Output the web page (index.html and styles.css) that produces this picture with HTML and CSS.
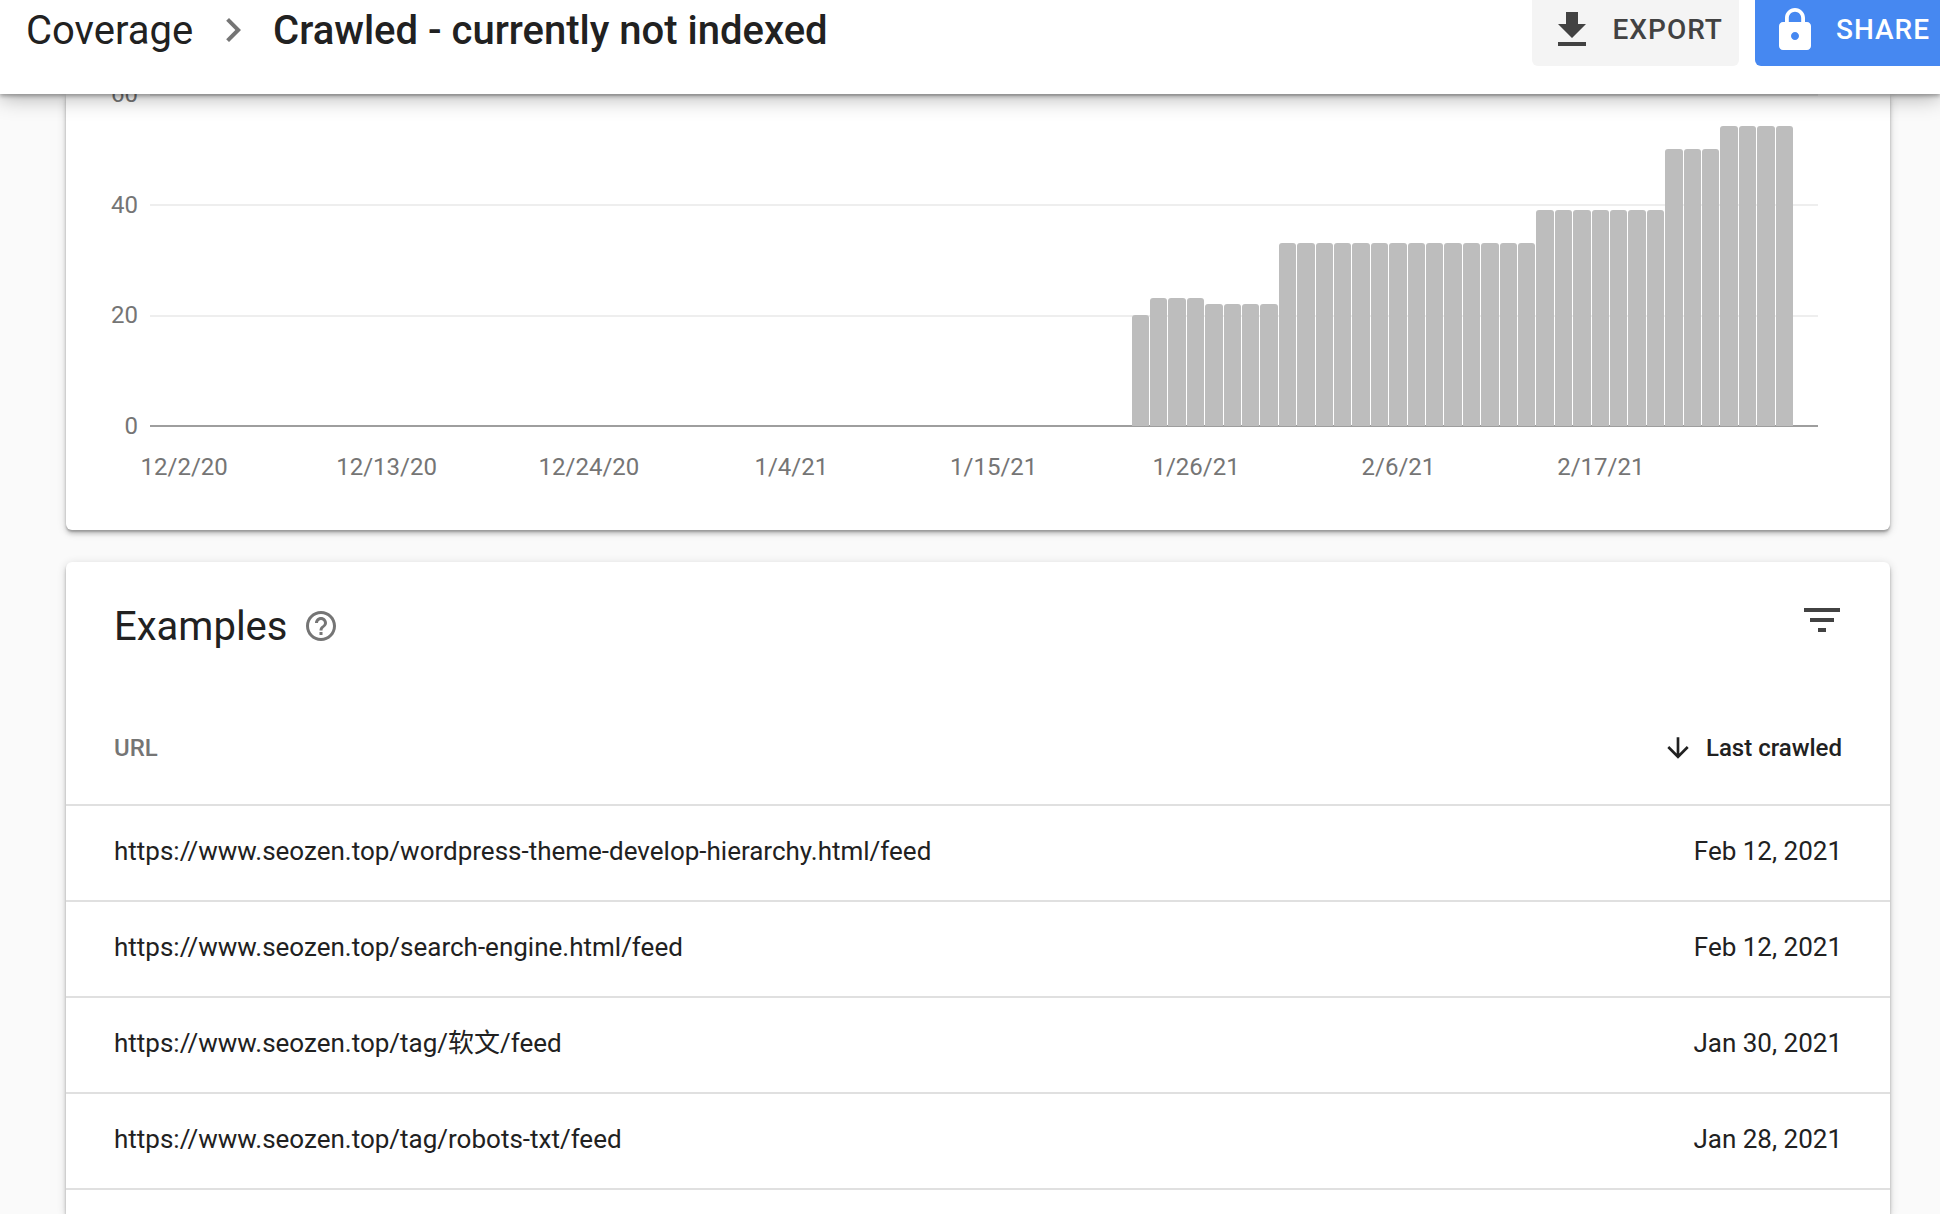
FILE: index.html
```html
<!DOCTYPE html>
<html lang="en">
<head>
<meta charset="utf-8">
<title>Crawled - currently not indexed</title>
<link rel="stylesheet" href="styles.css">
</head>
<body>
<header class="topbar">
  <nav class="crumbs" aria-label="Breadcrumb">
    <a class="crumb" href="#coverage">Coverage</a>
    <svg class="icon crumb-sep" viewBox="0 0 24 24" aria-hidden="true"><path d="M10 6L8.59 7.41 13.17 12l-4.58 4.59L10 18l6-6z"/></svg>
    <h1 class="crumb crumb-current">Crawled - currently not indexed</h1>
  </nav>
  <div class="actions">
    <button class="btn btn-export" type="button">
      <svg class="icon" viewBox="0 0 24 24" aria-hidden="true"><path d="M19 9h-4V3H9v6H5l7 7 7-7zM5 18v2h14v-2H5z"/></svg>
      EXPORT
    </button>
    <button class="btn btn-share" type="button">
      <svg class="icon" viewBox="0 0 24 24" aria-hidden="true"><path d="M18 8h-1V6c0-2.76-2.24-5-5-5S7 3.24 7 6v2H6c-1.1 0-2 .9-2 2v10c0 1.1.9 2 2 2h12c1.100 0 2-.9 2-2V10c0-1.100-.9-2-2-2zm-6 9c-1.100 0-2-.9-2-2s.9-2 2-2 2 .9 2 2-.9 2-2 2zm3.100-9H8.900V6c0-1.710 1.390-3.100 3.100-3.100 1.710 0 3.100 1.390 3.100 3.100v2z"/></svg>
      SHARE
    </button>
  </div>
</header>
<main class="content">
  <section class="card chart" aria-label="Pages over time">
    <div class="y-axis"><span>60</span><span>40</span><span>20</span><span>0</span></div>
    <div class="plot">
      <div class="gridlines"><span></span><span></span><span></span><span class="baseline"></span></div>
      <div class="bars">
        <i style="height:33.333%"></i>
        <i style="height:38.333%"></i><i style="height:38.333%"></i><i style="height:38.333%"></i>
        <i style="height:36.667%"></i><i style="height:36.667%"></i><i style="height:36.667%"></i><i style="height:36.667%"></i>
        <i style="height:55%"></i><i style="height:55%"></i><i style="height:55%"></i><i style="height:55%"></i><i style="height:55%"></i><i style="height:55%"></i><i style="height:55%"></i>
        <i style="height:55%"></i><i style="height:55%"></i><i style="height:55%"></i><i style="height:55%"></i><i style="height:55%"></i><i style="height:55%"></i><i style="height:55%"></i>
        <i style="height:65%"></i><i style="height:65%"></i><i style="height:65%"></i><i style="height:65%"></i><i style="height:65%"></i><i style="height:65%"></i><i style="height:65%"></i>
        <i style="height:83.333%"></i><i style="height:83.333%"></i><i style="height:83.333%"></i>
        <i style="height:90%"></i><i style="height:90%"></i><i style="height:90%"></i><i style="height:90%"></i>
      </div>
    </div>
    <div class="x-axis">
      <div class="tick"><span>12/2/20</span></div>
      <div class="tick"><span>12/13/20</span></div>
      <div class="tick"><span>12/24/20</span></div>
      <div class="tick"><span>1/4/21</span></div>
      <div class="tick"><span>1/15/21</span></div>
      <div class="tick"><span>1/26/21</span></div>
      <div class="tick"><span>2/6/21</span></div>
      <div class="tick"><span>2/17/21</span></div>
    </div>
  </section>
  <section class="card examples">
    <div class="examples-head">
      <h2 class="examples-title">Examples</h2>
      <button class="icon-btn help" type="button" aria-label="Help">
        <svg class="icon" viewBox="0 0 24 24" aria-hidden="true"><path d="M11 18h2v-2h-2v2zm1-16C6.480 2 2 6.480 2 12s4.480 10 10 10 10-4.480 10-10S17.520 2 12 2zm0 18c-4.410 0-8-3.590-8-8s3.590-8 8-8 8 3.590 8 8-3.590 8-8 8zm0-14c-2.210 0-4 1.790-4 4h2c0-1.100.9-2 2-2s2 .9 2 2c0 2-3 1.750-3 5h2c0-2.250 3-2.500 3-5 0-2.210-1.790-4-4-4z"/></svg>
      </button>
      <button class="icon-btn filter" type="button" aria-label="Filter rows">
        <svg class="icon" viewBox="0 0 24 24" aria-hidden="true"><path d="M10 18h4v-2h-4v2zM3 6v2h18V6H3zm3 7h12v-2H6v2z"/></svg>
      </button>
    </div>
    <table class="urls">
      <thead>
        <tr>
          <th scope="col">URL</th>
          <th class="date" scope="col" aria-sort="descending">
            <button class="sort" type="button">
              <svg class="icon" viewBox="0 0 24 24" aria-hidden="true"><path d="M20 12l-1.410-1.410L13 16.170V4h-2v12.170l-5.580-5.590L4 12l8 8 8-8z"/></svg>
              Last crawled
            </button>
          </th>
        </tr>
      </thead>
      <tbody>
        <tr><td>https://www.seozen.top/wordpress-theme-develop-hierarchy.html/feed</td><td class="date">Feb 12, 2021</td></tr>
        <tr><td>https://www.seozen.top/search-engine.html/feed</td><td class="date">Feb 12, 2021</td></tr>
        <tr><td>https://www.seozen.top/tag/软文/feed</td><td class="date">Jan 30, 2021</td></tr>
        <tr><td>https://www.seozen.top/tag/robots-txt/feed</td><td class="date">Jan 28, 2021</td></tr>
      </tbody>
    </table>
  </section>
</main>
</body>
</html>
```

FILE: styles.css
```css
* { box-sizing: border-box; }

body {
  margin: 0;
  height: 100vh;
  display: flex;
  flex-direction: column;
  overflow: hidden;
  background: #fafafa;
  color: #212121;
  font-family: Roboto, "Noto Sans CJK SC", sans-serif;
  font-size: 26px;
  line-height: 30px;
}

button {
  border: 0;
  padding: 0;
  background: none;
  font: inherit;
  color: inherit;
  cursor: pointer;
}

.icon {
  display: block;
  flex: none;
  width: 48px;
  height: 48px;
  fill: currentColor;
}

/* Top bar */
.topbar {
  position: relative;
  z-index: 1;
  flex: none;
  display: flex;
  justify-content: space-between;
  height: 94px;
  background: #fff;
  box-shadow: 0 2px 4px rgba(0, 0, 0, .3), 0 4px 20px rgba(0, 0, 0, .3);
}

.crumbs {
  display: flex;
  align-items: center;
  height: 60px;
  padding-left: 26px;
  font-size: 40px;
  line-height: 60px;
  white-space: nowrap;
}

.crumb { padding-top: 2px; color: inherit; text-decoration: none; }

.crumb-sep { margin: 0 16px; color: #757575; }

.crumb-current { margin: 0; font-size: inherit; font-weight: 500; }

.actions { display: flex; gap: 16px; height: 66px; }

.btn {
  display: flex;
  align-items: center;
  gap: 17px;
  padding: 0 16px 6px;
  font-size: 28px;
  font-weight: 500;
  letter-spacing: 1px;
}

.btn-export { border-radius: 0 0 6px 6px; background: #f4f4f4; color: #424242; }

.btn-share { padding-right: 10px; border-radius: 0 0 0 6px; background: #4688f1; color: #fff; }

/* Cards */
.content {
  flex: 1;
  display: flex;
  flex-direction: column;
  gap: 32px;
  padding: 0 50px 0 66px;
}

.card {
  background: #fff;
  box-shadow: 0 4px 4px rgba(0, 0, 0, .14), 0 2px 2px rgba(0, 0, 0, .2), 0 2px 10px rgba(0, 0, 0, .16);
}

/* Chart */
.chart {
  display: grid;
  grid-template-columns: 72px 1fr;
  column-gap: 12px;
  padding: 0 72px 51px 0;
  border-radius: 0 0 6px 6px;
  color: #757575;
  font-size: 24px;
  line-height: 24px;
}

.y-axis {
  display: flex;
  flex-direction: column;
  justify-content: space-between;
  margin: -12px 0 -11px;
  text-align: right;
}

.plot { display: grid; height: 333px; }

.gridlines,
.bars { grid-area: 1 / 1; min-height: 0; }

.gridlines {
  display: flex;
  flex-direction: column;
  justify-content: space-between;
}

.gridlines span { height: 2px; background: #eee; }

.gridlines .baseline { background: #9e9e9e; }

.bars {
  display: grid;
  grid-template-columns: repeat(88, minmax(0, 1fr));
  grid-template-rows: 100%;
  align-items: end;
  height: 333px;
  margin-top: -1px;
  padding: 0 24px 0 25px;
}

.bars i {
  margin-right: 1px;
  border-radius: 3px 3px 0 0;
  background: #bdbdbd;
}

/* The first 52 days hold no pages */
.bars i:first-child { grid-column: 53; }

.x-axis {
  grid-column: 2;
  display: grid;
  grid-template-columns: repeat(8, minmax(0, 1fr));
  margin-top: 28px;
  padding: 0 24px 0 25px;
}

/* Each tick spans 11 days; its label is centred on the first */
.tick {
  display: flex;
  justify-content: center;
  width: calc(100% / 11);
  white-space: nowrap;
}

/* Examples */
.examples { flex: 1; border-radius: 6px 6px 0 0; }

.examples-head {
  display: flex;
  align-items: flex-start;
  padding: 34px 44px 0 48px;
}

.examples-title {
  margin: 0;
  padding-top: 1px;
  font-size: 40px;
  font-weight: 400;
  line-height: 60px;
}

.help { margin: 12px 0 0 16px; color: #757575; }

.help .icon { width: 36px; height: 36px; }

.filter { margin-left: auto; color: #424242; }

.urls {
  width: 100%;
  border-collapse: separate;
  border-spacing: 0;
}

.urls th,
.urls td {
  padding: 30px 48px 34px;
  border-bottom: 2px solid #e0e0e0;
  text-align: left;
  vertical-align: top;
}

.urls th {
  padding-top: 79px;
  padding-bottom: 44px;
  color: #757575;
  font-size: 24px;
  font-weight: 500;
  line-height: 24px;
}

.urls .date { text-align: right; white-space: nowrap; }

.sort {
  display: flex;
  align-items: center;
  gap: 12px;
  height: 24px;
  margin-left: auto;
  color: #212121;
}

.sort .icon { width: 32px; height: 32px; }
```
